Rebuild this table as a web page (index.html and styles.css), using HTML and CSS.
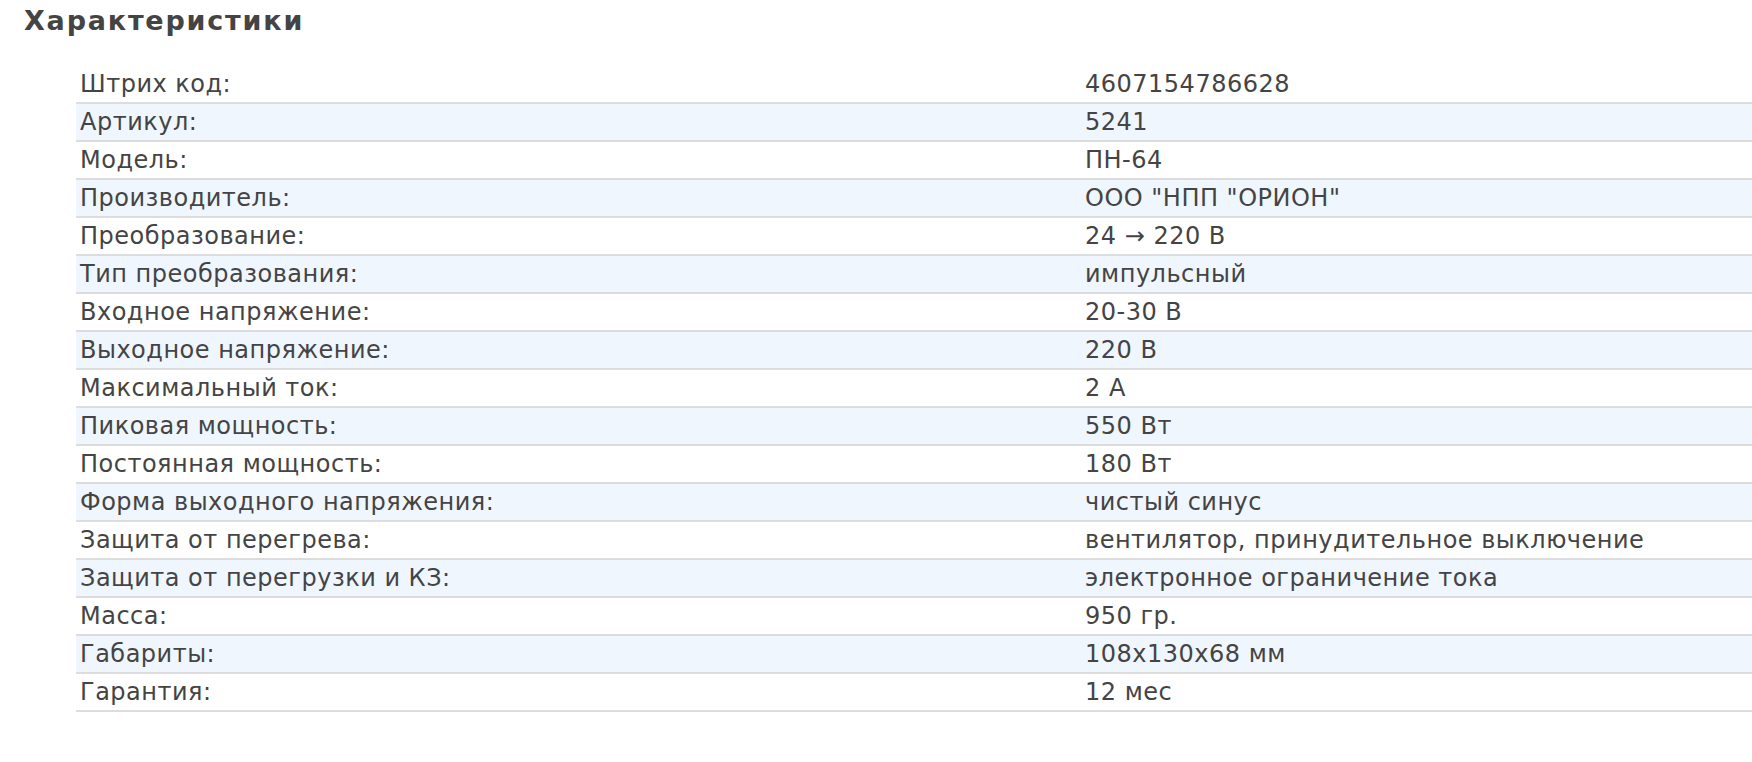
FILE: index.html
```html
<!DOCTYPE html>
<html lang="ru">
<head>
<meta charset="utf-8">
<title>Характеристики</title>
<link rel="stylesheet" href="styles.css">
</head>
<body>
<section class="specs">
  <h2 class="specs-title">Характеристики</h2>
  <table class="specs-table">
    <tbody>
      <tr><td class="name">Штрих код:</td><td class="value">4607154786628</td></tr>
      <tr><td class="name">Артикул:</td><td class="value">5241</td></tr>
      <tr><td class="name">Модель:</td><td class="value">ПН-64</td></tr>
      <tr><td class="name">Производитель:</td><td class="value">ООО "НПП "ОРИОН"</td></tr>
      <tr><td class="name">Преобразование:</td><td class="value">24 → 220 В</td></tr>
      <tr><td class="name">Тип преобразования:</td><td class="value">импульсный</td></tr>
      <tr><td class="name">Входное напряжение:</td><td class="value">20-30 В</td></tr>
      <tr><td class="name">Выходное напряжение:</td><td class="value">220 В</td></tr>
      <tr><td class="name">Максимальный ток:</td><td class="value">2 А</td></tr>
      <tr><td class="name">Пиковая мощность:</td><td class="value">550 Вт</td></tr>
      <tr><td class="name">Постоянная мощность:</td><td class="value">180 Вт</td></tr>
      <tr><td class="name">Форма выходного напряжения:</td><td class="value">чистый синус</td></tr>
      <tr><td class="name">Защита от перегрева:</td><td class="value">вентилятор, принудительное выключение</td></tr>
      <tr><td class="name">Защита от перегрузки и КЗ:</td><td class="value">электронное ограничение тока</td></tr>
      <tr><td class="name">Масса:</td><td class="value">950 гр.</td></tr>
      <tr><td class="name">Габариты:</td><td class="value">108x130x68 мм</td></tr>
      <tr><td class="name">Гарантия:</td><td class="value">12 мес</td></tr>
    </tbody>
  </table>
</section>
</body>
</html>
```

FILE: styles.css
```css
html, body {
  margin: 0;
  padding: 0;
  background: #ffffff;
}

body {
  font-family: "DejaVu Sans", Verdana, sans-serif;
  color: #444444;
  overflow: hidden;
}

.specs {
  padding: 6px 0 0 0;
}

.specs-title {
  margin: 0 0 30px 24px;
  font-size: 27px;
  line-height: 30px;
  font-weight: bold;
  letter-spacing: 1.8px;
  color: #444444;
}

.specs-table {
  margin-left: 76px;
  width: calc(100% - 76px);
  border-collapse: collapse;
  table-layout: fixed;
  font-size: 24px;
  line-height: 36px;
  letter-spacing: 0.5px;
}

.specs-table td {
  padding: 0 4px;
  border-bottom: 2px solid #dcdcdc;
  white-space: nowrap;
  vertical-align: top;
}

.specs-table td.name {
  width: 997px;
}

.specs-table tr:nth-child(even) td {
  background: #eff6fe;
}
```
